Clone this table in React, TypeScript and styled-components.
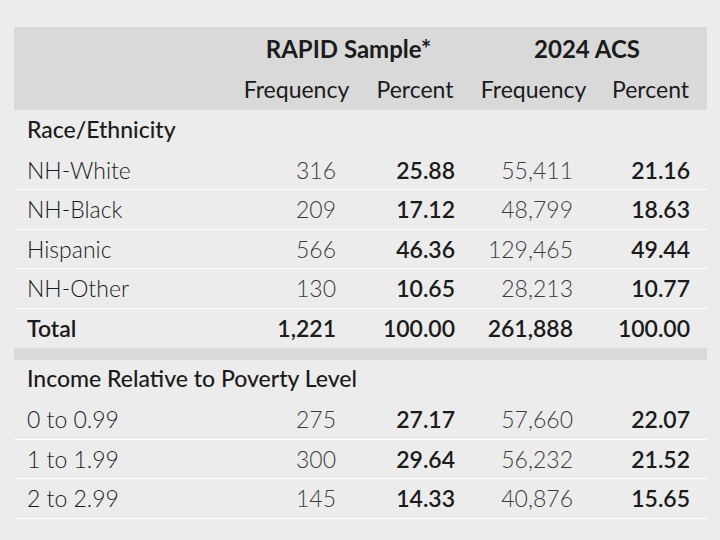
import React from "react";
import { createGlobalStyle, styled } from "styled-components";

type Row = {
  label: string;
  rapidFreq: string;
  rapidPct: string;
  acsFreq: string;
  acsPct: string;
};

const race: Row[] = [
  { label: "NH-White", rapidFreq: "316", rapidPct: "25.88", acsFreq: "55,411", acsPct: "21.16" },
  { label: "NH-Black", rapidFreq: "209", rapidPct: "17.12", acsFreq: "48,799", acsPct: "18.63" },
  { label: "Hispanic", rapidFreq: "566", rapidPct: "46.36", acsFreq: "129,465", acsPct: "49.44" },
  { label: "NH-Other", rapidFreq: "130", rapidPct: "10.65", acsFreq: "28,213", acsPct: "10.77" },
];

const income: Row[] = [
  { label: "0 to 0.99", rapidFreq: "275", rapidPct: "27.17", acsFreq: "57,660", acsPct: "22.07" },
  { label: "1 to 1.99", rapidFreq: "300", rapidPct: "29.64", acsFreq: "56,232", acsPct: "21.52" },
  { label: "2 to 2.99", rapidFreq: "145", rapidPct: "14.33", acsFreq: "40,876", acsPct: "15.65" },
];

function DataRow({ row, total }: { row: Row; total?: boolean }) {
  return (
    <StRow $total={total}>
      <StLabel $bold={total}>{row.label}</StLabel>
      <StFreq $bold={total}>{row.rapidFreq}</StFreq>
      <StPct>{row.rapidPct}</StPct>
      <StFreq $bold={total}>{row.acsFreq}</StFreq>
      <StPct $last>{row.acsPct}</StPct>
    </StRow>
  );
}

function App() {
  return (
    <>
      <GlobalStyle />
      <StPage>
        <StTable>
          <colgroup>
            <col style={{ width: 216 }} />
            <col style={{ width: 133 }} />
            <col style={{ width: 104 }} />
            <col style={{ width: 133 }} />
            <col style={{ width: 107 }} />
          </colgroup>
          <thead>
            <StHeadRow>
              <th />
              <StGroupHead colSpan={2}>RAPID Sample*</StGroupHead>
              <StGroupHead colSpan={2}>2024 ACS</StGroupHead>
            </StHeadRow>
            <StHeadRow>
              <th />
              <StSubHead>Frequency</StSubHead>
              <StSubHead>Percent</StSubHead>
              <StSubHead>Frequency</StSubHead>
              <StSubHead $last>Percent</StSubHead>
            </StHeadRow>
          </thead>
          <tbody>
            <StSectionRow>
              <StSection colSpan={5}>Race/Ethnicity</StSection>
            </StSectionRow>
            {race.map((row) => (
              <DataRow key={row.label} row={row} />
            ))}
            <DataRow
              total
              row={{ label: "Total", rapidFreq: "1,221", rapidPct: "100.00", acsFreq: "261,888", acsPct: "100.00" }}
            />
            <StSpacer>
              <td colSpan={5} />
            </StSpacer>
            <StSectionRow>
              <StSection colSpan={5}>Income Relative to Poverty Level</StSection>
            </StSectionRow>
            {income.map((row) => (
              <DataRow key={row.label} row={row} />
            ))}
          </tbody>
        </StTable>
      </StPage>
    </>
  );
}

export default App;

const GlobalStyle = createGlobalStyle`
  html, body {
    margin: 0;
    background: #ececec;
  }
  body {
    font-family: "Lato", "Open Sans", sans-serif;
    color: #1b1b1b;
  }
`;

const StPage = styled.div`
  width: 720px;
  height: 540px;
  padding: 27px 13px 0 14px;
  box-sizing: border-box;
`;

const StTable = styled.table`
  width: 693px;
  border-collapse: collapse;
  table-layout: fixed;
  th,
  td {
    padding: 0 12px;
  }
`;

const StHeadRow = styled.tr`
  background: #d9d9da;
  height: 41.5px;
`;

const StGroupHead = styled.th`
  font-size: 24px;
  font-weight: 700;
  text-align: center;
  padding-top: 1px !important;
`;

const StSubHead = styled.th<{ $last?: boolean }>`
  font-size: 23px;
  font-weight: 400;
  text-align: center;
  vertical-align: middle;
  padding-right: ${(p) => (p.$last ? "20px" : "12px")} !important;
`;

const StSectionRow = styled.tr`
  height: 40px;
`;

const StSection = styled.td`
  font-size: 23px;
  font-weight: 500;
  text-align: left;
  padding-left: 13px !important;
  padding-bottom: 3px !important;
`;

const StRow = styled.tr<{ $total?: boolean }>`
  height: 39.5px;
  border-bottom: ${(p) => (p.$total ? "none" : "1.5px solid #ffffff")};
`;

const StLabel = styled.td<{ $bold?: boolean }>`
  font-size: 23px;
  font-weight: ${(p) => (p.$bold ? 600 : 300)};
  padding-left: 13px !important;
  white-space: nowrap;
`;

const StFreq = styled.td<{ $bold?: boolean }>`
  font-size: 23px;
  font-weight: ${(p) => (p.$bold ? 600 : 300)};
  color: ${(p) => (p.$bold ? "#1b1b1b" : "#3c3c3c")};
  text-align: right;
  padding-right: 27px !important;
`;

const StPct = styled.td<{ $last?: boolean }>`
  font-size: 23px;
  font-weight: 600;
  text-align: right;
  padding-right: ${(p) => (p.$last ? "17px" : "12px")} !important;
`;

const StSpacer = styled.tr`
  height: 12px;
  background: #d9d9da;
`;
